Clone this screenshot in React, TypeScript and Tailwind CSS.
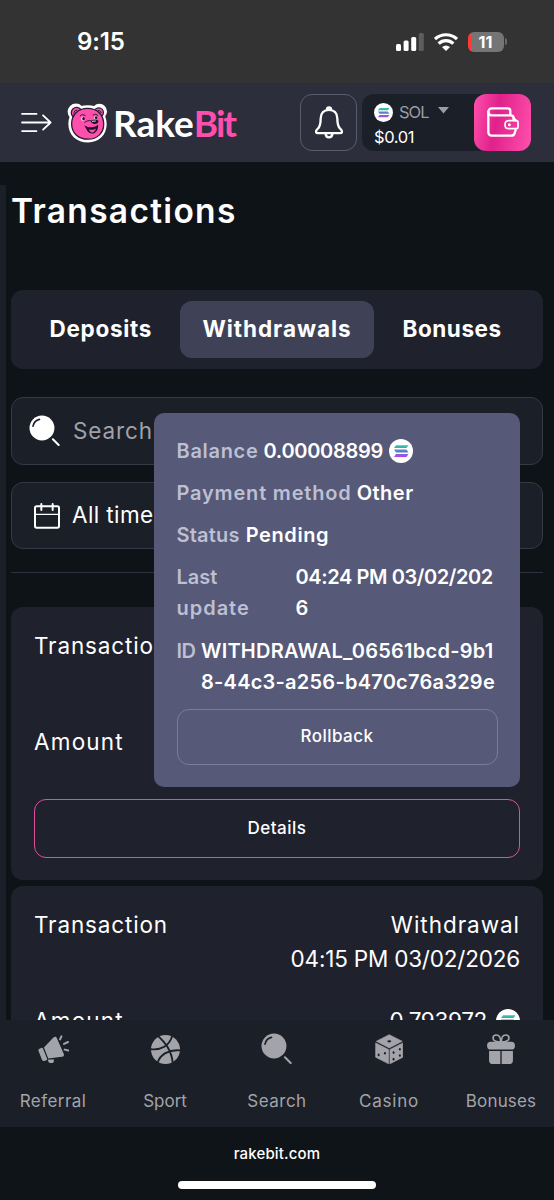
import React, { useId } from "react";

function SolanaIcon({ className }: { className: string }) {
  const id = useId();
  return (
    <svg viewBox="0 0 24 24" className={className}>
      <defs>
        <linearGradient id={id} x1="0" y1="6" x2="0" y2="19" gradientUnits="userSpaceOnUse">
          <stop offset="0" stopColor="#2fc9a8" />
          <stop offset="0.5" stopColor="#5a7fc4" />
          <stop offset="1" stopColor="#c13df0" />
        </linearGradient>
      </defs>
      <circle cx="12" cy="12" r="12" fill="#fff" />
      <g fill={`url(#${id})`}>
        <path d="M7 6.200h12.500l-2 2.900H5z" />
        <path d="M5 10.600h12.500l2 2.900H7z" />
        <path d="M7 15h12.500l-2 2.900H5z" />
      </g>
    </svg>
  );
}

function BearLogo() {
  return (
    <svg viewBox="0 0 124 120" className="h-[40px] w-[41px]">
      <g fill="#fff">
        <circle cx="27" cy="26" r="25" />
        <circle cx="98" cy="25" r="23" />
        <path d="M62 6c35 0 58 23 58 58 0 32-24 55-56 55C29 119 4 96 4 62 4 29 29 6 62 6z" />
      </g>
      <g fill="#ff4fad" stroke="#2a1a35" strokeWidth="4">
        <circle cx="29" cy="29" r="16" />
        <circle cx="96" cy="28" r="14" />
        <path d="M62 16c29 0 49 19 49 48 0 27-20 45-47 45C34 109 14 90 14 62c0-26 20-46 48-46z" />
      </g>
      <g fill="none" stroke="#2a1a35" strokeWidth="3" strokeLinecap="round">
        <path d="M21 31c0-7 4-10 9-10M103 29c-1-5-4-7-8-7" />
        <path d="M40 38c5-4 10-4 15-1M79 36c5-4 10-3 14 1" />
        <path d="M54 58c6-5 12-6 18-5" />
      </g>
      <ellipse cx="48" cy="47" rx="5" ry="6" fill="#fff" />
      <ellipse cx="87" cy="44" rx="5" ry="5" fill="#fff" />
      <ellipse cx="50" cy="47" rx="4" ry="5" fill="#1c1426" />
      <ellipse cx="88" cy="44" rx="4" ry="4.500" fill="#1c1426" />
      <path d="M72 54c6-4 18-5 23-1 1 6-5 10-11 10s-12-4-12-9z" fill="#1c1426" />
      <path d="M77 55l9-1" stroke="#fff" strokeWidth="2.500" strokeLinecap="round" />
      <path d="M52 67c10 8 28 9 42-2 2 14-7 27-19 27-9 0-14-7-17-15-2-4-4-6-6-10z" fill="#1c1426" />
      <path d="M66 79c7 3 16 2 22-2-2 7-7 12-12 12s-8-5-10-10z" fill="#ff4fad" />
    </svg>
  );
}

function MenuIcon() {
  return (
    <svg viewBox="0 0 94 64" className="h-[21px] w-[31px]" fill="none" stroke="#fff" strokeWidth="5.500" strokeLinecap="round" strokeLinejoin="round">
      <path d="M3 6h44M3 32h86M3 58h44M67 10l23 22-23 22" />
    </svg>
  );
}

function BellIcon() {
  return (
    <svg viewBox="0 0 84 98" className="h-[33px] w-[28px]" fill="none" stroke="#fff" strokeWidth="7" strokeLinejoin="round" strokeLinecap="round">
      <path d="M42 11c-15 0-25 10-25 26 0 18-2 24-8 30-4 4-6 7-6 9 0 3 2 5 6 5h66c4 0 6-2 6-5 0-2-2-5-6-9-6-6-8-12-8-30 0-16-10-26-25-26z" />
      <path d="M36 10c0-8 12-8 12 0M32 83c1 14 19 14 20 0" />
    </svg>
  );
}

function WalletIcon() {
  return (
    <svg viewBox="0 0 96 90" className="mb-[1px] h-[30px] w-[32px]" fill="none" stroke="#fff" strokeWidth="7" strokeLinejoin="round" strokeLinecap="round">
      <path d="M80 38V34c0-6-3-9-9-9H14C7 25 4 21 4 15S8 4 14 4h48c5 0 8 3 8 8v12" />
      <path d="M4 15v60c0 7 4 11 11 11h58c6 0 9-3 10-8l3-9" />
      <path d="M80 34l6 6" />
      <path d="M66 41h22c3 0 5 2 5 5v14c0 3-2 5-5 5H66c-8 0-12-6-12-12s4-12 12-12z" strokeWidth="5" />
      <circle cx="67" cy="53" r="4.500" fill="#fff" stroke="none" />
    </svg>
  );
}

function SearchIcon({ className, arc }: { className: string; arc: string }) {
  return (
    <svg viewBox="0 0 92 92" className={className} fill="none">
      <circle cx="38.500" cy="38.500" r="37" fill="currentColor" />
      <path d="M12 33c2-10 9-18 19-20" stroke={arc} strokeWidth="5" strokeLinecap="round" />
      <path d="M71 72l17 17" stroke="currentColor" strokeWidth="6" strokeLinecap="round" />
    </svg>
  );
}

function CalendarIcon() {
  return (
    <svg viewBox="0 0 78 78" className="h-[26px] w-[26px]" fill="none" stroke="#fff" strokeWidth="6" strokeLinejoin="round" strokeLinecap="round">
      <rect x="3" y="10" width="72" height="64" rx="5" />
      <path d="M3 34h72" strokeWidth="4" />
      <path d="M22 3v18M56 3v18" />
    </svg>
  );
}

function MegaphoneIcon() {
  return (
    <svg viewBox="0 0 94 86" className="h-[28.500px] w-[31px]" fill="currentColor">
      <path d="M18 38 46 8c4-4 9-4 11 1l21 48c2 5 0 9-5 9l-42 5z" />
      <path d="M2 49c-2-4 0-6 4-8l4-2c3-1 4 0 5 2l12 29c1 3 1 5-2 6l-4 2c-4 2-7 1-9-3z" />
      <path d="M29 75l18-2c3 6 0 13-7 13-6 0-8-4-11-11z" />
      <path d="M67 13l4-9M79 27l12-6M81 44l11 3" fill="none" stroke="currentColor" strokeWidth="6" strokeLinecap="round" />
    </svg>
  );
}

function BallIcon() {
  return (
    <svg viewBox="0 0 86 86" className="h-[29px] w-[29px]" fill="none">
      <circle cx="43" cy="43" r="43" fill="currentColor" />
      <path d="M18 0c22 20 44 44 47 88M-2 42c30 4 58-8 66-44M20 84c4-26 34-42 68-38" stroke="#1b1f28" strokeWidth="5.500" />
    </svg>
  );
}

function DiceIcon() {
  return (
    <svg viewBox="0 0 86 92" className="h-[30.500px] w-[28.500px]">
      <g fill="currentColor" stroke="currentColor" strokeWidth="2" strokeLinejoin="round">
        <path d="M43 2 82 22 43 42 4 22z" />
        <path d="M2 27 41 47v43L2 70z" />
        <path d="M84 27 45 47v43l39-20z" />
      </g>
      <g fill="#1b1f28">
        <ellipse cx="43" cy="22" rx="6" ry="3.500" />
        <ellipse cx="11" cy="63" rx="3" ry="4" />
        <ellipse cx="30" cy="58" rx="3" ry="4" />
        <ellipse cx="56" cy="56" rx="3" ry="4" />
        <ellipse cx="75" cy="46" rx="3" ry="4" />
        <ellipse cx="56" cy="76" rx="3" ry="4" />
        <ellipse cx="75" cy="65" rx="3" ry="4" />
      </g>
    </svg>
  );
}

function GiftIcon() {
  return (
    <svg viewBox="0 0 84 92" className="h-[30.500px] w-[28px]" fill="currentColor">
      <rect x="0" y="23" width="84" height="24" rx="11" />
      <path d="M6 51h34v40H18C10 91 6 87 6 79zM44 51h34v28c0 8-4 12-12 12H44z" />
      <path d="M41 24C24 24 18 18 18 12c0-5 4-9 10-9 8 0 13 8 13 21zM43 24c17 0 23-6 23-12 0-5-4-9-10-9-8 0-13 8-13 21z" fill="none" stroke="currentColor" strokeWidth="5" />
    </svg>
  );
}

function StatusBar() {
  return (
    <div className="flex h-[83px] shrink-0 items-center justify-between bg-[#333333] pr-[47px] pl-[77px]">
      <span className="text-[24px] font-semibold tracking-[-0.150px]">9:15</span>
      <div className="flex items-center">
        <svg viewBox="0 0 28 18" className="h-[18px] w-[28px]">
          <rect x="0" y="11" width="5" height="7" rx="1.500" fill="#fff" />
          <rect x="7.600" y="7.500" width="5" height="10.500" rx="1.500" fill="#fff" />
          <rect x="15.200" y="4" width="5" height="14" rx="1.500" fill="#fff" />
          <rect x="22.800" y="0" width="5" height="18" rx="1.500" fill="#5d5d5d" />
        </svg>
        <svg viewBox="0 0 72 54" className="ml-[10px] h-[18px] w-[24px]" fill="none" stroke="#fff" strokeWidth="9.500">
          <path d="M3 18c19-17 47-17 66 0M14 32c12-12 32-12 44 0" />
          <path d="M24 42c8-6 16-6 24 0L36 54z" fill="#fff" stroke="none" />
        </svg>
        <div className="ml-[10px] flex h-[20px] w-[36px] items-center justify-center overflow-hidden rounded-[6px] bg-linear-to-r from-[#ff3b35] from-10% to-[#757575] to-10% pr-[1px] text-[16px] font-bold">
          11
        </div>
        <div className="ml-[1px] h-[7px] w-[2px] rounded-r-full bg-[#6a6a6a]" />
      </div>
    </div>
  );
}

function Header() {
  return (
    <header className="flex h-[79px] shrink-0 items-center bg-[#2c2e3c] pr-[23px] pl-[21px]">
      <MenuIcon />
      <div className="ml-[15px] flex items-center">
        <BearLogo />
        <span className="ml-[5px] font-['Lato'] text-[37px] leading-[40px] font-bold">
          Rake<span className="tracking-[-2px] text-[#ff4fad]">Bit</span>
        </span>
      </div>
      <div className="ml-auto flex h-[57px] w-[57px] items-center justify-center rounded-[12px] border border-[#5a5d70]">
        <BellIcon />
      </div>
      <div className="ml-[5px] flex h-[57px] w-[169px] rounded-[12px] bg-[#1b1f28]">
        <div className="flex flex-1 flex-col pt-[6px] pl-[12px]">
          <div className="flex h-[25px] items-center">
            <SolanaIcon className="h-[19px] w-[19px]" />
            <span className="ml-[6px] text-[16.500px] tracking-[-1px] text-[#9b9da5]">SOL</span>
            <svg viewBox="0 0 11 7" className="mb-[5px] ml-[9px] h-[7px] w-[11px]">
              <path d="M0 0h11L5.500 6.500z" fill="#9b9da5" />
            </svg>
          </div>
          <span className="text-[16.500px] leading-[25px] tracking-[-0.400px]">$0.01</span>
        </div>
        <div className="flex h-[57px] w-[57px] items-center justify-center rounded-[12px] bg-linear-[100deg] from-[#ff51ae] via-[#e0218a] via-40% to-[#ff51ae]">
          <WalletIcon />
        </div>
      </div>
    </header>
  );
}

function DetailsPopup() {
  return (
    <div className="absolute top-[251px] left-[154px] flex h-[374px] w-[366px] flex-col gap-[11.300px] rounded-[10px] bg-[#565977] px-[22.500px] pt-[22.500px] text-[20px] leading-[31px] font-semibold">
      <div className="flex items-center whitespace-nowrap">
        <span className="tracking-[0.700px] text-[#bdbfd2]">Balance</span>
        <span className="ml-[5px] tracking-[-0.290px]">0.00008899</span>
        <SolanaIcon className="ml-[6px] h-[24px] w-[24px]" />
      </div>
      <div className="flex whitespace-nowrap">
        <span className="tracking-[0.820px] text-[#bdbfd2]">Payment method</span>
        <span className="ml-[5px] tracking-[0.500px]">Other</span>
      </div>
      <div className="flex whitespace-nowrap">
        <span className="tracking-[0.210px] text-[#bdbfd2]">Status</span>
        <span className="ml-[6px] tracking-[0.600px]">Pending</span>
      </div>
      <div className="flex whitespace-nowrap">
        <span className="w-[119px] text-[#bdbfd2]">
          Last
          <br />
          <span className="tracking-[0.980px]">update</span>
        </span>
        <span className="tracking-[-0.400px]">
          04:24 PM 03/02/202
          <br />6
        </span>
      </div>
      <div className="flex whitespace-nowrap">
        <span className="w-[24.500px] tracking-[-0.540px] text-[#bdbfd2]">ID</span>
        <span className="tracking-[0.240px]">
          WITHDRAWAL_06561bcd-9b1
          <br />
          8-44c3-a256-b470c76a329e
        </span>
      </div>
      <button className="h-[56px] shrink-0 rounded-[12px] border border-[#7a7d98] text-[17px] leading-none font-medium tracking-[0.460px]">
        Rollback
      </button>
    </div>
  );
}

function Transactions() {
  return (
    <div className="relative flex flex-1 overflow-hidden bg-[#0e1317]">
      <div className="mt-[23px] w-[5.500px] shrink-0 bg-[#1b1f28]" />
      <main className="ml-[5.500px] flex w-[532px] shrink-0 flex-col">
        <h1 className="mt-[24px] text-[33.500px] leading-[50px] font-semibold tracking-[1.300px]">Transactions</h1>
        <div className="mt-[54px] flex h-[79px] shrink-0 items-center rounded-[12px] bg-[#1f222d] pb-[1px] text-[22.500px] font-bold">
          <span className="w-[169px] pl-[38.500px] tracking-[0.700px]">Deposits</span>
          <span className="flex h-[57px] w-[194px] items-center justify-center rounded-[12px] bg-[#3f4257] tracking-[0.950px]">
            Withdrawals
          </span>
          <span className="flex-1 pl-[28.500px] tracking-[0.550px]">Bonuses</span>
        </div>
        <div className="mt-[28px] flex h-[68px] shrink-0 items-center rounded-[12px] border border-[#353845] bg-[#1b1f28] pl-[17px] text-[22.500px] text-[#a0a2aa]">
          <SearchIcon className="mt-[-2px] h-[31px] w-[31px] text-white" arc="#1b1f28" />
          <span className="ml-[13px] tracking-[0.900px]">Search</span>
        </div>
        <div className="mt-[17px] flex h-[67px] shrink-0 items-center rounded-[12px] border border-[#353845] bg-[#1b1f28] pl-[22px] text-[22.500px]">
          <CalendarIcon />
          <span className="ml-[12px] pb-[2px] tracking-[0.390px]">All time</span>
        </div>
        <div className="mt-[23px] h-px shrink-0 bg-[#2f323e]" />
        <section className="mt-[34px] flex h-[273px] shrink-0 flex-col rounded-[12px] bg-[#1f222d] px-[23px] text-[22.500px]">
          <span className="mt-[22px] leading-[34px] tracking-[0.850px]">Transaction</span>
          <span className="mt-[62px] leading-[34px] tracking-[1.200px]">Amount</span>
          <button className="mt-[40px] h-[59px] shrink-0 rounded-[12px] border-[1.500px] border-[#dd509f] text-[17px] font-medium tracking-[0.500px]">
            Details
          </button>
        </section>
        <section className="mt-[6px] flex h-[273px] shrink-0 flex-col rounded-[12px] bg-[#1f222d] px-[23px] text-[22.500px] leading-[34px]">
          <div className="mt-[21.500px] flex justify-between">
            <span className="tracking-[0.850px]">Transaction</span>
            <span className="flex flex-col items-end">
              <span className="tracking-[0.950px]">Withdrawal</span>
              <span className="tracking-[-0.200px]">04:15 PM 03/02/2026</span>
            </span>
          </div>
          <div className="mt-[28px] flex items-center justify-between">
            <span className="tracking-[1.200px]">Amount</span>
            <span className="flex items-center">
              <span className="tracking-[-0.340px]">0.793972</span>
              <SolanaIcon className="ml-[9px] h-[24px] w-[24px]" />
            </span>
          </div>
        </section>
      </main>
      <DetailsPopup />
    </div>
  );
}

function BottomNav() {
  return (
    <nav className="h-[107px] shrink-0 bg-[#1b1f28] text-[17px] text-[#a3a4a9]">
      <div className="-mx-[3px] grid grid-cols-5">
        <div className="flex flex-col items-center">
          <div className="flex h-[58px] items-center"><MegaphoneIcon /></div>
          <span className="mt-[11px] tracking-[0.440px]">Referral</span>
        </div>
        <div className="flex flex-col items-center">
          <div className="flex h-[58px] items-center"><BallIcon /></div>
          <span className="mt-[11px]">Sport</span>
        </div>
        <div className="flex flex-col items-center">
          <div className="flex h-[58px] items-center pr-[2px] pb-[2px]"><SearchIcon className="h-[31px] w-[31px]" arc="#1b1f28" /></div>
          <span className="mt-[11px] tracking-[0.480px]">Search</span>
        </div>
        <div className="flex flex-col items-center">
          <div className="flex h-[58px] items-center"><DiceIcon /></div>
          <span className="mt-[11px] tracking-[0.750px]">Casino</span>
        </div>
        <div className="flex flex-col items-center">
          <div className="flex h-[58px] items-center"><GiftIcon /></div>
          <span className="mt-[11px] tracking-[0.150px]">Bonuses</span>
        </div>
      </div>
    </nav>
  );
}

export default function App() {
  return (
    <div className="flex h-[1200px] w-[554px] flex-col overflow-hidden bg-[#0f1419] font-['Inter',sans-serif] text-white">
      <StatusBar />
      <Header />
      <Transactions />
      <BottomNav />
      <div className="flex h-[73px] shrink-0 flex-col items-center">
        <span className="mt-[17px] text-[15px] leading-[20px] font-medium tracking-[0.150px]">rakebit.com</span>
        <div className="mt-[17px] h-[8px] w-[198px] rounded-full bg-white" />
      </div>
    </div>
  );
}
